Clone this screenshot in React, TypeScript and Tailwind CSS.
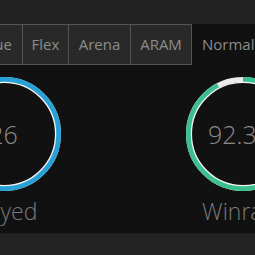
import React from 'react'

const tabs = [
    { label: 'Solo Queue', width: 'w-[120px] ml-[-97px] justify-end pr-[10px]' },
    { label: 'Flex', width: 'w-[46px] justify-center' },
    { label: 'Arena', width: 'w-[62px] justify-center' },
    { label: 'ARAM', width: 'w-[61px] justify-center' },
]

interface Stat {
    value: string;
    label: string;
    percent: number;
    color: string;
}

const stats: Stat[] = [
    { value: '26', label: 'Played', percent: 100, color: '#27a1d5' },
    { value: '92.3%', label: 'Winrate', percent: 92.3, color: '#3bbf8e' },
]

function Ring({ stat }: { stat: Stat }) {
    const r = 54.5
    const c = 2 * Math.PI * r
    return (
        <div className="relative w-[114px] h-[114px] flex items-center justify-center">
            <svg width="114" height="114" viewBox="0 0 114 114" className="absolute inset-0">
                <circle cx="57" cy="57" r={r} fill="none" stroke="#ececec" strokeWidth="5" />
                <circle
                    cx="57"
                    cy="57"
                    r={r}
                    fill="none"
                    stroke={stat.color}
                    strokeWidth="5"
                    strokeDasharray={`${(c * stat.percent) / 100} ${c}`}
                    transform="rotate(-90 57 57)"
                />
                <circle cx="57" cy="57" r="51.6" fill="none" stroke="#f5f5f5" strokeWidth="1.3" />
            </svg>
            <span className="relative text-[25px] font-light text-[#8a8a8a] leading-none">{stat.value}</span>
        </div>
    )
}

export default function App() {
    return (
        <div className="w-[255px] h-[255px] overflow-hidden bg-[#222222] flex flex-col" style={{ fontFamily: '"Open Sans", sans-serif' }}>
            <div className="h-[24px] shrink-0" />
            <div className="flex h-[41px] shrink-0">
                {tabs.map((t) => (
                    <div
                        key={t.label}
                        className={`${t.width} shrink-0 flex items-center bg-[#292929] border-y border-r border-[#555555] text-[15px] text-[#8c8c8c] whitespace-nowrap`}
                    >
                        {t.label}
                    </div>
                ))}
                <div className="flex-1 shrink-0 bg-[#111111] flex items-center pl-[10px] text-[15px] text-[#8c8c8c] whitespace-nowrap">
                    Normal
                </div>
            </div>
            <div className="bg-[#111111] h-[168px] shrink-0 flex ml-[-116px] pt-[12px]">
                {stats.map((s) => (
                    <div key={s.label} className="w-[239px] shrink-0 flex flex-col items-center">
                        <Ring stat={s} />
                        <div className="mt-[3px] text-[23px] font-light text-[#7a7a7a] whitespace-nowrap">{s.label}</div>
                    </div>
                ))}
            </div>
            <div className="flex-1 bg-[#232323] border-t border-[#1b1b1b]" />
        </div>
    )
}
